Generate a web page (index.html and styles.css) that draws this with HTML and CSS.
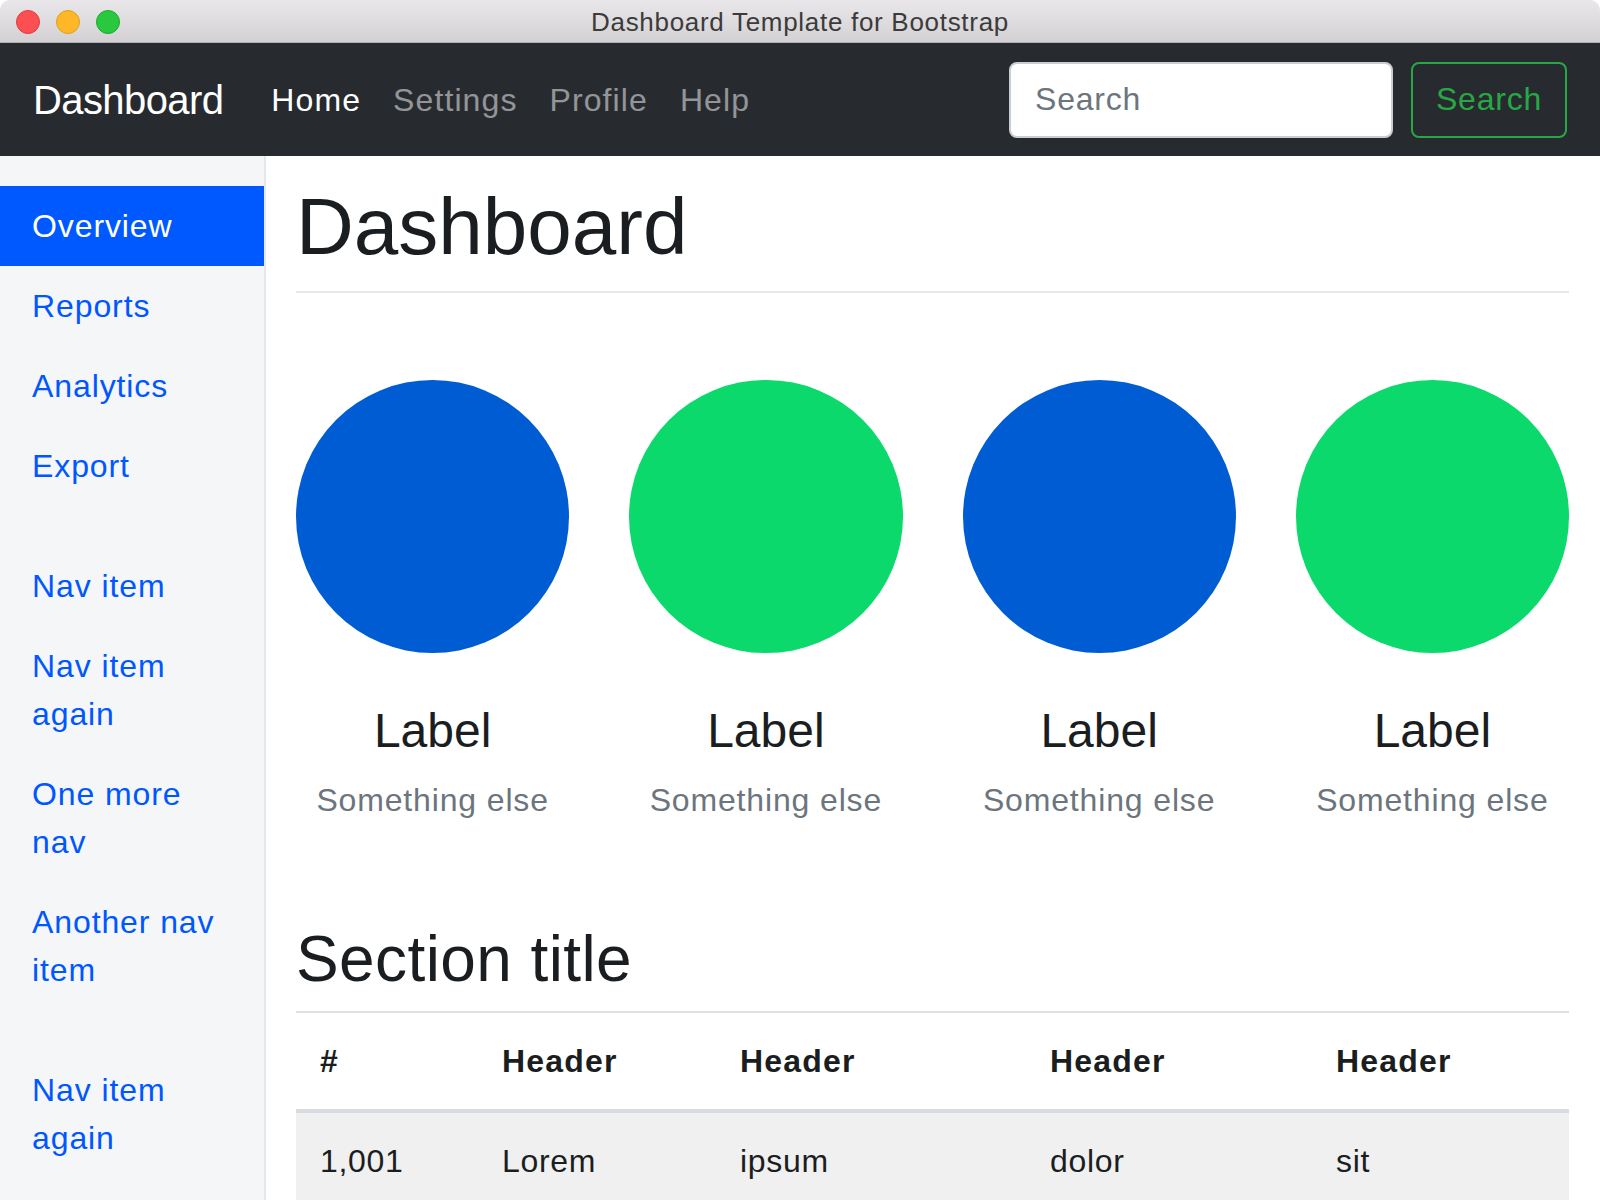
FILE: index.html
```html
<!DOCTYPE html>
<html lang="en">
<head>
<meta charset="utf-8">
<title>Dashboard Template for Bootstrap</title>
<link rel="stylesheet" href="styles.css">
</head>
<body>
<div class="window">
  <div class="titlebar">
    <div class="lights">
      <span class="light red"></span>
      <span class="light yellow"></span>
      <span class="light green"></span>
    </div>
    <div class="title">Dashboard Template for Bootstrap</div>
    <div class="spacer"></div>
  </div>
  <nav class="navbar">
    <a class="brand" href="#">Dashboard</a>
    <ul class="topnav">
      <li><a class="active" href="#">Home</a></li>
      <li><a href="#">Settings</a></li>
      <li><a href="#">Profile</a></li>
      <li><a href="#">Help</a></li>
    </ul>
    <form class="search">
      <input class="search-input" type="text" placeholder="Search">
      <button class="search-btn" type="button">Search</button>
    </form>
  </nav>
  <div class="layout">
    <aside class="sidebar">
      <ul class="sidenav">
        <li><a class="active" href="#">Overview</a></li>
        <li><a href="#">Reports</a></li>
        <li><a href="#">Analytics</a></li>
        <li><a href="#">Export</a></li>
      </ul>
      <ul class="sidenav">
        <li><a href="#">Nav item</a></li>
        <li><a href="#">Nav item again</a></li>
        <li><a href="#">One more nav</a></li>
        <li><a href="#">Another nav item</a></li>
      </ul>
      <ul class="sidenav">
        <li><a href="#">Nav item again</a></li>
      </ul>
    </aside>
    <main class="main">
      <h1 class="page-title">Dashboard</h1>
      <div class="placeholders">
        <div class="placeholder">
          <div class="circle blue"></div>
          <h4 class="ph-label">Label</h4>
          <div class="ph-muted">Something else</div>
        </div>
        <div class="placeholder">
          <div class="circle green"></div>
          <h4 class="ph-label">Label</h4>
          <div class="ph-muted">Something else</div>
        </div>
        <div class="placeholder">
          <div class="circle blue"></div>
          <h4 class="ph-label">Label</h4>
          <div class="ph-muted">Something else</div>
        </div>
        <div class="placeholder">
          <div class="circle green"></div>
          <h4 class="ph-label">Label</h4>
          <div class="ph-muted">Something else</div>
        </div>
      </div>
      <h2 class="section-title">Section title</h2>
      <table class="data-table">
        <colgroup>
          <col class="c1"><col class="c2"><col class="c3"><col class="c4"><col class="c5">
        </colgroup>
        <thead>
          <tr><th>#</th><th>Header</th><th>Header</th><th>Header</th><th>Header</th></tr>
        </thead>
        <tbody>
          <tr><td>1,001</td><td>Lorem</td><td>ipsum</td><td>dolor</td><td>sit</td></tr>
        </tbody>
      </table>
    </main>
  </div>
</div>
</body>
</html>
```
FILE: styles.css
```css
* { box-sizing: border-box; }

html, body {
  margin: 0;
  padding: 0;
  background: #ffffff;
}

body {
  font-family: "Liberation Sans", Arial, sans-serif;
  color: #212529;
}

a { text-decoration: none; }

ul { list-style: none; margin: 0; padding: 0; }

.window {
  width: 1600px;
  height: 100vh;
  display: flex;
  flex-direction: column;
  overflow: hidden;
  border-radius: 10px 10px 0 0;
}

/* title bar */
.titlebar {
  height: 43px;
  flex: 0 0 43px;
  display: grid;
  grid-template-columns: 1fr auto 1fr;
  align-items: center;
  background: linear-gradient(#e9e7e9, #d3d1d3);
  border-bottom: 1px solid #b1afb1;
}

.lights {
  display: flex;
  gap: 16px;
  padding-left: 16px;
  padding-top: 1px;
}

.light {
  width: 24px;
  height: 24px;
  border-radius: 50%;
  display: block;
}

.light.red { background: #fc4f51; border: 1px solid #de3c3f; }
.light.yellow { background: #fdb727; border: 1px solid #dda023; }
.light.green { background: #29c83f; border: 1px solid #1bab2a; }

.title {
  font-size: 26px;
  letter-spacing: 0.7px;
  color: #3b3b3b;
  padding-top: 2px;
}

/* navbar */
.navbar {
  height: 113px;
  flex: 0 0 113px;
  background: #272b30;
  display: flex;
  align-items: center;
  padding: 0 33px 0 33px;
}

.brand {
  font-size: 40px;
  line-height: 60px;
  letter-spacing: -0.6px;
  color: #ffffff;
  margin-right: 32px;
}

.topnav {
  display: flex;
}

.topnav a {
  display: block;
  padding: 0 16px;
  font-size: 32px;
  line-height: 48px;
  letter-spacing: 1.1px;
  color: rgba(255, 255, 255, 0.5);
}

.topnav a.active { color: #ffffff; }

.search {
  margin-left: auto;
  display: flex;
  align-items: center;
  gap: 18px;
}

.search-input {
  width: 384px;
  height: 76px;
  border: 2px solid #c9ced3;
  border-radius: 8px;
  padding: 0 24px;
  font-family: "Liberation Sans", Arial, sans-serif;
  font-size: 32px;
  letter-spacing: 0.8px;
  background: #ffffff;
  color: #495057;
  outline: none;
}

.search-input::placeholder { color: #6c757d; }

.search-btn {
  height: 76px;
  width: 156px;
  border: 2px solid #28a745;
  border-radius: 8px;
  background: transparent;
  color: #28a745;
  font-family: "Liberation Sans", Arial, sans-serif;
  font-size: 32px;
  letter-spacing: 0.8px;
  padding: 0;
}

/* layout */
.layout {
  flex: 1;
  display: flex;
  min-height: 0;
}

.sidebar {
  width: 266px;
  flex: 0 0 266px;
  background: #f5f6f8;
  border-right: 2px solid #e7e7e8;
  padding-top: 30px;
}

.sidenav { margin-bottom: 40px; }

.sidenav a {
  display: block;
  padding: 16px 32px;
  font-size: 32px;
  line-height: 48px;
  letter-spacing: 0.9px;
  color: #0057ff;
}

.sidenav a.active {
  background: #0058ff;
  color: #ffffff;
}

.main {
  flex: 1;
  min-width: 0;
  padding: 23px 31px 0 30px;
}

.page-title {
  margin: 0;
  font-size: 80px;
  line-height: 96px;
  font-weight: 400;
  color: #1b1e21;
  padding-bottom: 16px;
  border-bottom: 2px solid #e8e8e8;
}

.placeholders {
  display: grid;
  grid-template-columns: repeat(4, 1fr);
  margin: 87px -30px 0 -30px;
}

.placeholder {
  padding: 0 30px;
  text-align: center;
}

.circle {
  width: 100%;
  aspect-ratio: 1 / 1;
  border-radius: 50%;
}

.circle.blue { background: #005cd3; }
.circle.green { background: #0bd96c; }

.ph-label {
  margin: 49px 0 16px 0;
  font-size: 48px;
  line-height: 57.6px;
  font-weight: 400;
  color: #1b1e21;
}

.ph-muted {
  font-size: 32px;
  line-height: 48px;
  letter-spacing: 0.85px;
  color: #6c757d;
}

.section-title {
  margin: 97px 0 13px 0;
  font-size: 64px;
  line-height: 76.8px;
  font-weight: 400;
  letter-spacing: 0.4px;
  color: #1b1e21;
}

.data-table {
  width: 100%;
  table-layout: fixed;
  border-collapse: collapse;
  font-size: 32px;
  line-height: 48px;
  letter-spacing: 0.7px;
}

.c1 { width: 182px; }
.c2 { width: 238px; }
.c3 { width: 310px; }
.c4 { width: 286px; }
.c5 { width: auto; }

.data-table th,
.data-table td {
  padding: 24px;
  text-align: left;
  vertical-align: top;
  border-top: 2px solid #dee2e6;
  color: #1b1e21;
}

.data-table th {
  font-weight: 700;
  letter-spacing: 1.2px;
  border-bottom: 4px solid #d8dce0;
}

.data-table tbody tr:nth-child(odd) { background: #f0f0f0; }
```
